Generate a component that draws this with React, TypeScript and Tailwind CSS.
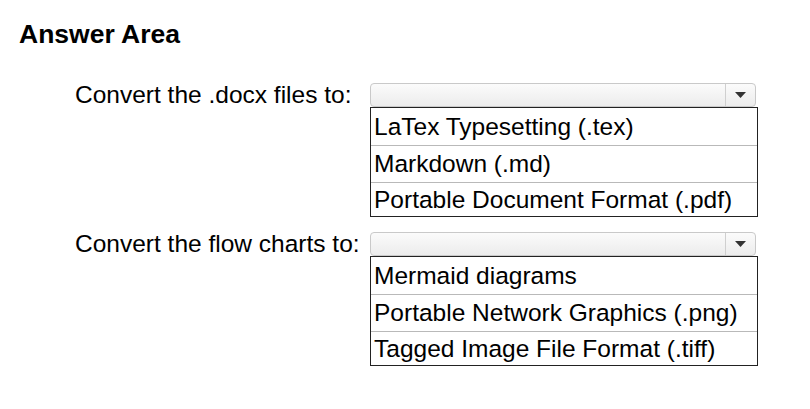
function Dropdown() {
  return (
    <div className="flex h-[24px] w-[386px] rounded-[4px] border border-[#c9c9c9] bg-gradient-to-b from-[#fbfbfb] to-[#ececec]">
      <div className="flex-1" />
      <div className="flex w-[30px] items-center justify-center border-l border-[#cfcfcf]">
        <svg width="11" height="6" viewBox="0 0 11 6">
          <path d="M0 0 L11 0 L5.5 6 Z" fill="#333" />
        </svg>
      </div>
    </div>
  );
}

function Question({ label, options }: { label: string; options: string[] }) {
  const heights = ["h-[38px]", "h-[37px]", "h-[33px]"];
  return (
    <div className="flex">
      <div className="ml-[56px] w-[295px] text-[24.5px] leading-[23px] text-black">{label}</div>
      <div className="flex flex-col">
        <Dropdown />
        <div className="w-[388px] border border-[#222] bg-white">
          {options.map((o, i) => (
            <div
              key={o}
              className={`flex items-center pl-[3px] text-[24.5px] leading-[24px] text-black ${heights[i]} ${
                i < options.length - 1 ? "border-b border-[#b9b9b9]" : ""
              }`}
            >
              {o}
            </div>
          ))}
        </div>
      </div>
    </div>
  );
}

export default function App() {
  return (
    <div className="h-[409px] w-[810px] bg-white px-[19px] pt-[21px] font-['Liberation_Sans',Arial,sans-serif]">
      <h1 className="text-[26.5px] font-bold leading-[26px] text-black">Answer Area</h1>
      <div className="mt-[36px] flex flex-col gap-[15px]">
        <Question
          label="Convert the .docx files to:"
          options={["LaTex Typesetting (.tex)", "Markdown (.md)", "Portable Document Format (.pdf)"]}
        />
        <Question
          label="Convert the flow charts to:"
          options={["Mermaid diagrams", "Portable Network Graphics (.png)", "Tagged Image File Format (.tiff)"]}
        />
      </div>
    </div>
  );
}
